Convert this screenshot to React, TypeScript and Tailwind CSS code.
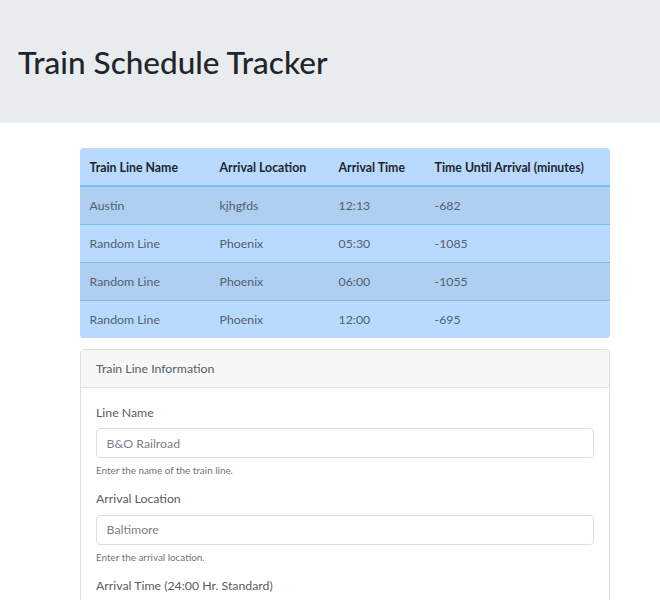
import React from "react";

const rows = [
  ["Austin", "kjhgfds", "12:13", "-682"],
  ["Random Line", "Phoenix", "05:30", "-1085"],
  ["Random Line", "Phoenix", "06:00", "-1055"],
  ["Random Line", "Phoenix", "12:00", "-695"],
];

export default function App() {
  return (
    <div className="min-h-[600px] bg-white text-[#212529]" style={{ fontFamily: 'Lato, "Open Sans", sans-serif' }}>
      <div className="bg-[#e9ecef] h-[123px] flex items-center pl-[18px]">
        <h1 className="text-[31.5px] leading-[38px] font-medium text-[#212529] m-0">Train Schedule Tracker</h1>
      </div>
      <div className="ml-[80px] w-[530px] mt-[25px]">
        <div className="rounded-[4px] overflow-hidden">
          <table className="w-full table-fixed border-collapse text-[12.3px] leading-[19px] bg-[#b8daff] whitespace-nowrap">
            <colgroup>
              <col className="w-[130px]" />
              <col className="w-[119px]" />
              <col className="w-[96px]" />
              <col />
            </colgroup>
            <thead>
              <tr className="border-b-2 border-[#7abaff]">
                <th className="text-left font-bold px-[9.6px] pt-[9.5px] pb-[8.5px]">Train Line Name</th>
                <th className="text-left font-bold px-[9.6px] pt-[9.5px] pb-[8.5px]">Arrival Location</th>
                <th className="text-left font-bold px-[9.6px] pt-[9.5px] pb-[8.5px]">Arrival Time</th>
                <th className="text-left font-bold px-[9.6px] pt-[9.5px] pb-[8.5px]">Time Until Arrival (minutes)</th>
              </tr>
            </thead>
            <tbody className="text-[#56606a]">
              {rows.map((r, i) => (
                <tr key={i} className={(i % 2 === 0 ? "bg-[#aecef2] " : "bg-[#b8daff] ") + (i > 0 ? "border-t border-[#7abaff]" : "")}>
                  {r.map((c, j) => (
                    <td key={j} className="px-[9.6px] py-[9px]">{c}</td>
                  ))}
                </tr>
              ))}
            </tbody>
          </table>
        </div>

        <div className="mt-[11px] border border-[#dfdfdf] rounded-[4px] overflow-hidden text-[12.3px] leading-[19.2px]">
          <div className="bg-[#f7f7f7] border-b border-[#dfdfdf] px-[15px] py-[9px] text-[#555d65]">Train Line Information</div>
          <div className="px-[15px] pt-[15px] text-[#555d65]">
            <div className="mb-[11px]">
              <div className="mb-[6px]">Line Name</div>
              <div className="h-[30px] border border-[#dcdfe2] rounded-[4px] px-[9.6px] flex items-center text-[#7a8188]">B&amp;O Railroad</div>
              <div className="mt-[4px] text-[9.9px] leading-[16px] text-[#6c757d]">Enter the name of the train line.</div>
            </div>
            <div className="mb-[11px]">
              <div className="mb-[6px]">Arrival Location</div>
              <div className="h-[30px] border border-[#dcdfe2] rounded-[4px] px-[9.6px] flex items-center text-[#7a8188]">Baltimore</div>
              <div className="mt-[4px] text-[9.9px] leading-[16px] text-[#6c757d]">Enter the arrival location.</div>
            </div>
            <div className="mb-[11px]">
              <div className="mb-[7px]">Arrival Time (24:00 Hr. Standard)</div>
              <div className="h-[30px] border border-[#dcdfe2] rounded-[4px] px-[9.6px] flex items-center text-[#7a8188]">13:00</div>
            </div>
          </div>
        </div>
      </div>
    </div>
  );
}
